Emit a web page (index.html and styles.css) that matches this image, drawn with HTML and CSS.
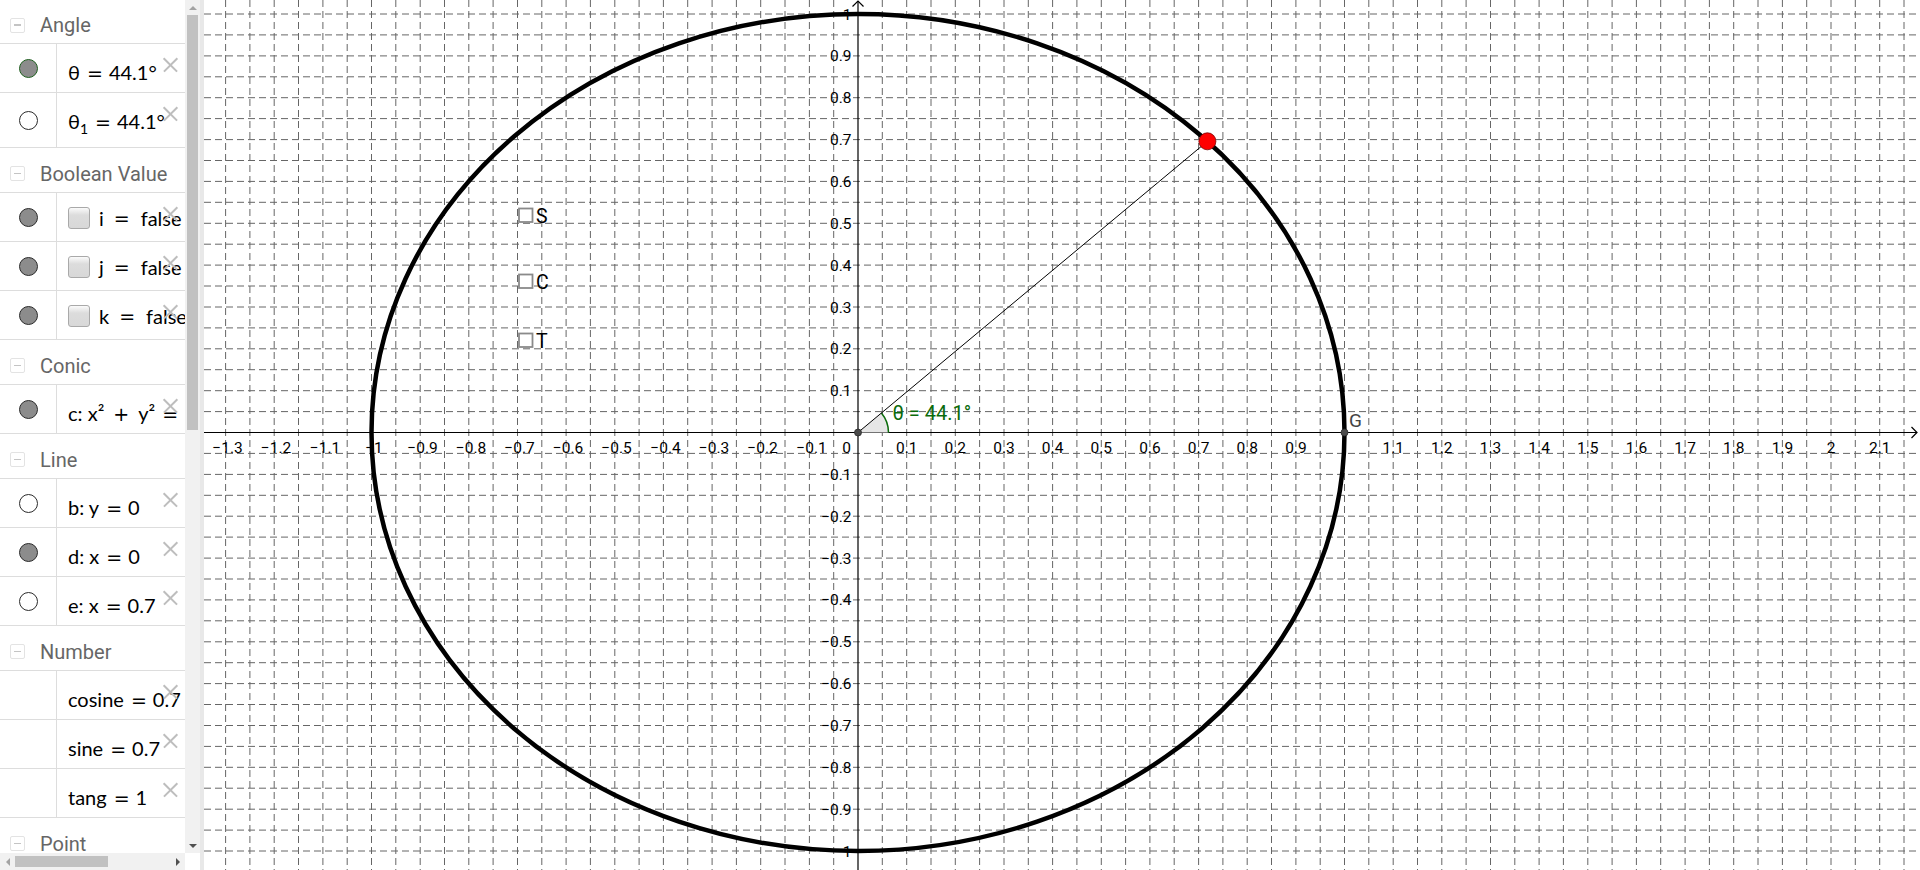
FILE: index.html
```html
<!DOCTYPE html>
<html lang="en">
<head>
<meta charset="utf-8">
<title>Unit circle</title>
<link rel="stylesheet" href="styles.css">
</head>
<body>
<div class="app">
  <aside class="algebra">
    <div class="list">
      <div class="hdr first"><span class="mbox"></span><span class="htxt">Angle</span></div>
      <div class="row"><div class="mcell"><span class="marble on green"></span></div><div class="val">θ<span class="op">=</span>44.1°</div><span class="del"></span></div>
      <div class="row tall"><div class="mcell"><span class="marble"></span></div><div class="val">θ<sub>1</sub><span class="op">=</span>44.1°</div><span class="del"></span></div>

      <div class="hdr"><span class="mbox"></span><span class="htxt">Boolean Value</span></div>
      <div class="row"><div class="mcell"><span class="marble on"></span></div><div class="val bool"><span class="cb"></span>i<span class="op">=</span>false</div><span class="del"></span></div>
      <div class="row"><div class="mcell"><span class="marble on"></span></div><div class="val bool"><span class="cb"></span>j<span class="op">=</span>false</div><span class="del"></span></div>
      <div class="row"><div class="mcell"><span class="marble on"></span></div><div class="val bool"><span class="cb"></span>k<span class="op">=</span>false</div><span class="del"></span></div>

      <div class="hdr"><span class="mbox"></span><span class="htxt">Conic</span></div>
      <div class="row"><div class="mcell"><span class="marble on"></span></div><div class="val">c: x²<span class="op wide">+</span>y²<span class="op">=</span>1</div><span class="del"></span></div>

      <div class="hdr"><span class="mbox"></span><span class="htxt">Line</span></div>
      <div class="row"><div class="mcell"><span class="marble"></span></div><div class="val">b: y<span class="op">=</span>0</div><span class="del"></span></div>
      <div class="row"><div class="mcell"><span class="marble on"></span></div><div class="val">d: x<span class="op">=</span>0</div><span class="del"></span></div>
      <div class="row"><div class="mcell"><span class="marble"></span></div><div class="val">e: x<span class="op">=</span>0.7</div><span class="del"></span></div>

      <div class="hdr"><span class="mbox"></span><span class="htxt">Number</span></div>
      <div class="row"><div class="mcell"></div><div class="val">cosine<span class="op">=</span>0.7</div><span class="del"></span></div>
      <div class="row"><div class="mcell"></div><div class="val">sine<span class="op">=</span>0.7</div><span class="del"></span></div>
      <div class="row"><div class="mcell"></div><div class="val">tang<span class="op">=</span>1</div><span class="del"></span></div>

      <div class="hdr"><span class="mbox"></span><span class="htxt">Point</span></div>
    </div>
    <div class="vscroll"><span class="sbtn"><span class="tri up"></span></span><span class="vthumb"></span><span class="vspace"></span><span class="sbtn"><span class="tri down"></span></span></div>
    <div class="hscroll"><span class="sbtn"><span class="tri left"></span></span><span class="hthumb"></span><span class="hspace"></span><span class="sbtn"><span class="tri right"></span></span></div>
    <div class="corner"></div>
  </aside>
  <div class="split"></div>
  <main class="graphics">
    <svg class="canvas" width="1716" height="870" viewBox="204 0 1716 870" xmlns="http://www.w3.org/2000/svg">
      <path class="grid" d="M225.6 0V870M249.9 0V870M274.2 0V870M298.5 0V870M322.9 0V870M347.2 0V870M371.5 0V870M395.8 0V870M420.2 0V870M444.5 0V870M468.8 0V870M493.1 0V870M517.5 0V870M541.8 0V870M566.1 0V870M590.4 0V870M614.8 0V870M639.1 0V870M663.4 0V870M687.7 0V870M712.1 0V870M736.4 0V870M760.7 0V870M785 0V870M809.4 0V870M833.7 0V870M882.3 0V870M906.7 0V870M931 0V870M955.3 0V870M979.6 0V870M1004 0V870M1028.3 0V870M1052.6 0V870M1076.9 0V870M1101.3 0V870M1125.6 0V870M1149.9 0V870M1174.2 0V870M1198.6 0V870M1222.9 0V870M1247.2 0V870M1271.5 0V870M1295.9 0V870M1320.2 0V870M1344.5 0V870M1368.8 0V870M1393.2 0V870M1417.5 0V870M1441.8 0V870M1466.1 0V870M1490.5 0V870M1514.8 0V870M1539.1 0V870M1563.4 0V870M1587.8 0V870M1612.1 0V870M1636.4 0V870M1660.7 0V870M1685.1 0V870M1709.4 0V870M1733.7 0V870M1758 0V870M1782.4 0V870M1806.7 0V870M1831 0V870M1855.3 0V870M1879.7 0V870M1904 0V870
      M204 14H1920M204 34.9H1920M204 55.9H1920M204 76.8H1920M204 97.7H1920M204 118.6H1920M204 139.6H1920M204 160.5H1920M204 181.4H1920M204 202.3H1920M204 223.3H1920M204 244.2H1920M204 265.1H1920M204 286H1920M204 307H1920M204 327.9H1920M204 348.8H1920M204 369.7H1920M204 390.7H1920M204 411.6H1920M204 453.4H1920M204 474.4H1920M204 495.3H1920M204 516.2H1920M204 537.1H1920M204 558.1H1920M204 579H1920M204 599.9H1920M204 620.8H1920M204 641.8H1920M204 662.7H1920M204 683.6H1920M204 704.5H1920M204 725.5H1920M204 746.4H1920M204 767.3H1920M204 788.2H1920M204 809.2H1920M204 830.1H1920M204 851H1920"/>

      <g class="xlab">
        <text x="227.5" y="453">−1.3</text>
        <text x="276" y="453">−1.2</text>
        <text x="325" y="453">−1.1</text>
        <text x="374" y="453">−1</text>
        <text x="422.5" y="453">−0.9</text>
        <text x="471" y="453">−0.8</text>
        <text x="519.5" y="453">−0.7</text>
        <text x="568" y="453">−0.6</text>
        <text x="616.5" y="453">−0.5</text>
        <text x="665.5" y="453">−0.4</text>
        <text x="714" y="453">−0.3</text>
        <text x="762.5" y="453">−0.2</text>
        <text x="811.5" y="453">−0.1</text>
        <text x="906.7" y="453">0.1</text>
        <text x="955.3" y="453">0.2</text>
        <text x="1004" y="453">0.3</text>
        <text x="1052.6" y="453">0.4</text>
        <text x="1101.3" y="453">0.5</text>
        <text x="1149.9" y="453">0.6</text>
        <text x="1198.6" y="453">0.7</text>
        <text x="1247.2" y="453">0.8</text>
        <text x="1295.9" y="453">0.9</text>
        <text x="1393.2" y="453">1.1</text>
        <text x="1441.8" y="453">1.2</text>
        <text x="1490.5" y="453">1.3</text>
        <text x="1539.1" y="453">1.4</text>
        <text x="1587.8" y="453">1.5</text>
        <text x="1636.4" y="453">1.6</text>
        <text x="1685.1" y="453">1.7</text>
        <text x="1733.7" y="453">1.8</text>
        <text x="1782.4" y="453">1.9</text>
        <text x="1831" y="453">2</text>
        <text x="1879.7" y="453">2.1</text>
      </g>
      <g class="ylab">
        <text x="851" y="453">0</text>
        <text x="851.5" y="19.5">1</text>
        <text x="851.5" y="61.4">0.9</text>
        <text x="851.5" y="103.2">0.8</text>
        <text x="851.5" y="145.1">0.7</text>
        <text x="851.5" y="186.9">0.6</text>
        <text x="851.5" y="228.8">0.5</text>
        <text x="851.5" y="270.6">0.4</text>
        <text x="851.5" y="312.5">0.3</text>
        <text x="851.5" y="354.3">0.2</text>
        <text x="851.5" y="396.2">0.1</text>
        <text x="851.5" y="479.9">−0.1</text>
        <text x="851.5" y="521.7">−0.2</text>
        <text x="851.5" y="563.6">−0.3</text>
        <text x="851.5" y="605.4">−0.4</text>
        <text x="851.5" y="647.3">−0.5</text>
        <text x="851.5" y="689.1">−0.6</text>
        <text x="851.5" y="731">−0.7</text>
        <text x="851.5" y="772.8">−0.8</text>
        <text x="851.5" y="814.7">−0.9</text>
        <text x="851.5" y="856.5">−1</text>
      </g>

      <path class="axis" d="M204 432.5H1917M858 870V1"/>
      <path class="arrow" d="M1911.5 427L1917 432.5L1911.5 438M852.5 6.5L858 1L863.5 6.5"/>

      <path class="sector" d="M858 432.5L888.5 432.5A30.5 30.5 0 0 0 881.4 413Z"/>
      <path class="arc" d="M888.5 432.5A30.5 30.5 0 0 0 881.4 413"/>
      <line class="seg" x1="858" y1="432.5" x2="1207.4" y2="141.3"/>
      <ellipse class="conic" cx="858" cy="432.5" rx="486.5" ry="418.5"/>

      <circle class="pt-dark" cx="858" cy="432.5" r="3.5"/>
      <circle class="pt-dark" cx="1344.5" cy="432.5" r="3.5"/>
      <circle class="pt-red" cx="1207.4" cy="141.3" r="8.5"/>

      <text class="glabel" x="1349" y="427">G</text>
      <text class="anglabel" x="892.5" y="420">θ = 44.1°</text>

      <rect class="cbox" x="519" y="208.5" width="13.5" height="13.5"/>
      <text class="cbtext" x="536" y="222.5">S</text>
      <rect class="cbox" x="519" y="274.5" width="13.5" height="13.5"/>
      <text class="cbtext" x="536" y="288.5">C</text>
      <rect class="cbox" x="519" y="333.5" width="13.5" height="13.5"/>
      <text class="cbtext" x="536" y="347.5">T</text>
    </svg>
  </main>
</div>
</body>
</html>
```
FILE: styles.css
```css
html, body {
  margin: 0;
  padding: 0;
  width: 1920px;
  height: 870px;
  overflow: hidden;
  background: #ffffff;
}

.app {
  display: flex;
  width: 1920px;
  height: 870px;
}

/* ---------- Algebra view ---------- */
.algebra {
  width: 200px;
  flex: none;
  display: grid;
  grid-template-columns: 185px 15px;
  grid-template-rows: 853px 17px;
  background: #ffffff;
}

.list {
  overflow: hidden;
  font-family: Lato, "Liberation Sans", sans-serif;
}

.hdr {
  height: 45px;
  box-sizing: border-box;
  border-bottom: 1px solid #dddddd;
  display: flex;
  align-items: center;
  padding: 7px 0 0 10px;
}
.hdr.first {
  height: 44px;
}

.mbox {
  width: 15px;
  height: 15px;
  box-sizing: border-box;
  border: 1px solid #e3e3e3;
  border-radius: 2px;
  display: flex;
  align-items: center;
  justify-content: center;
  flex: none;
}
.mbox::before {
  content: "";
  width: 7px;
  height: 1.5px;
  background: #c4c4c4;
}

.htxt {
  margin-left: 15px;
  font-family: Roboto, "Liberation Sans", sans-serif;
  font-size: 20px;
  color: #666666;
  line-height: 24px;
  white-space: nowrap;
}

.row {
  position: relative;
  display: flex;
  height: 49px;
  box-sizing: border-box;
  border-bottom: 1px solid #dddddd;
}
.row.tall {
  height: 55px;
}

.mcell {
  width: 57px;
  flex: none;
  box-sizing: border-box;
  border-right: 1px solid #dddddd;
  display: flex;
  align-items: center;
  justify-content: center;
}

.marble {
  width: 19px;
  height: 19px;
  box-sizing: border-box;
  border-radius: 50%;
  border: 1px solid #2b2b2b;
  background: #ffffff;
}
.marble.on {
  background: #8c8c8c;
}
.marble.green {
  border-color: #1f5f1f;
}

.val {
  flex: 1;
  min-width: 0;
  overflow: hidden;
  white-space: nowrap;
  padding: 16px 0 0 11px;
  font-size: 20px;
  line-height: 24px;
  color: #000000;
}
.val.bool {
  display: flex;
  align-items: center;
  padding-top: 1px;
}
.val.bool .op {
  margin: 0 11px 0 10px;
}
.val sub {
  font-size: 14px;
  line-height: 0;
  vertical-align: -5px;
}

.op {
  font-family: "DejaVu Sans", sans-serif;
  font-size: 19px;
  margin: 0 6px 0 7px;
}
.op.wide {
  margin: 0 9px 0 9px;
}

.cb {
  width: 22px;
  height: 22px;
  flex: none;
  box-sizing: border-box;
  border: 1px solid #a9a9a9;
  border-radius: 3px;
  background: linear-gradient(#fbfbfb 0%, #dcdcdc 35%, #d8d8d8 100%);
  margin: 0 9px 0 0;
}

.del {
  position: absolute;
  top: 13px;
  right: 7px;
  width: 15px;
  height: 15px;
}
.del::before,
.del::after {
  content: "";
  position: absolute;
  left: -2px;
  top: 7px;
  width: 19px;
  height: 1.5px;
  background: #bdbdbd;
  transform: rotate(45deg);
}
.del::after {
  transform: rotate(-45deg);
}

/* scrollbars */
.vscroll {
  background: #f1f1f1;
  display: flex;
  flex-direction: column;
  align-items: center;
}
.vthumb {
  width: 11px;
  height: 415px;
  background: #c1c1c1;
  flex: none;
}
.vspace {
  flex: 1;
}
.hscroll {
  background: #f1f1f1;
  display: flex;
  align-items: center;
}
.hthumb {
  width: 93px;
  height: 11px;
  background: #c1c1c1;
  flex: none;
}
.hspace {
  flex: 1;
}
.corner {
  background: #ffffff;
}
.sbtn {
  width: 15px;
  height: 15px;
  flex: none;
  display: flex;
  align-items: center;
  justify-content: center;
}
.tri {
  width: 0;
  height: 0;
}
.tri.up {
  border-left: 4px solid transparent;
  border-right: 4px solid transparent;
  border-bottom: 4px solid #a3a3a3;
}
.tri.down {
  border-left: 4px solid transparent;
  border-right: 4px solid transparent;
  border-top: 4px solid #505050;
}
.tri.left {
  border-top: 4px solid transparent;
  border-bottom: 4px solid transparent;
  border-right: 4px solid #a3a3a3;
}
.tri.right {
  border-top: 4px solid transparent;
  border-bottom: 4px solid transparent;
  border-left: 4px solid #505050;
}

.split {
  width: 4px;
  flex: none;
  background: #e8e8e8;
}

/* ---------- Graphics view ---------- */
.graphics {
  flex: 1;
  min-width: 0;
  height: 870px;
  overflow: hidden;
  background: #ffffff;
}
.canvas {
  display: block;
}

.grid {
  fill: none;
  stroke: #666666;
  stroke-width: 1;
  stroke-dasharray: 7 4;
}
.axis {
  fill: none;
  stroke: #000000;
  stroke-width: 1.2;
}
.arrow {
  fill: none;
  stroke: #000000;
  stroke-width: 1.2;
}

.xlab text,
.ylab text {
  font-family: Roboto, "Liberation Sans", sans-serif;
  font-size: 15.5px;
  fill: #000000;
}
.xlab text {
  text-anchor: middle;
}
.ylab text {
  text-anchor: end;
}

.sector {
  fill: #e6e6e6;
  stroke: none;
}
.arc {
  fill: none;
  stroke: #0b6b0b;
  stroke-width: 1.5;
}
.seg {
  stroke: #000000;
  stroke-width: 1;
}
.conic {
  fill: none;
  stroke: #000000;
  stroke-width: 4.5;
}
.pt-dark {
  fill: #4a4a4a;
  stroke: #2a2a2a;
  stroke-width: 0.8;
}
.pt-red {
  fill: #ff0000;
  stroke: #7a0000;
  stroke-width: 0.8;
}
.glabel {
  font-family: Roboto, "Liberation Sans", sans-serif;
  font-size: 19px;
  fill: #444444;
}
.anglabel {
  font-family: Roboto, "Liberation Sans", sans-serif;
  font-size: 20px;
  fill: #0b6b0b;
}
.cbox {
  fill: #ffffff;
  stroke: #8a8a8a;
  stroke-width: 1.8;
}
.cbtext {
  font-family: Roboto, "Liberation Sans", sans-serif;
  font-size: 19.5px;
  fill: #000000;
}
```
